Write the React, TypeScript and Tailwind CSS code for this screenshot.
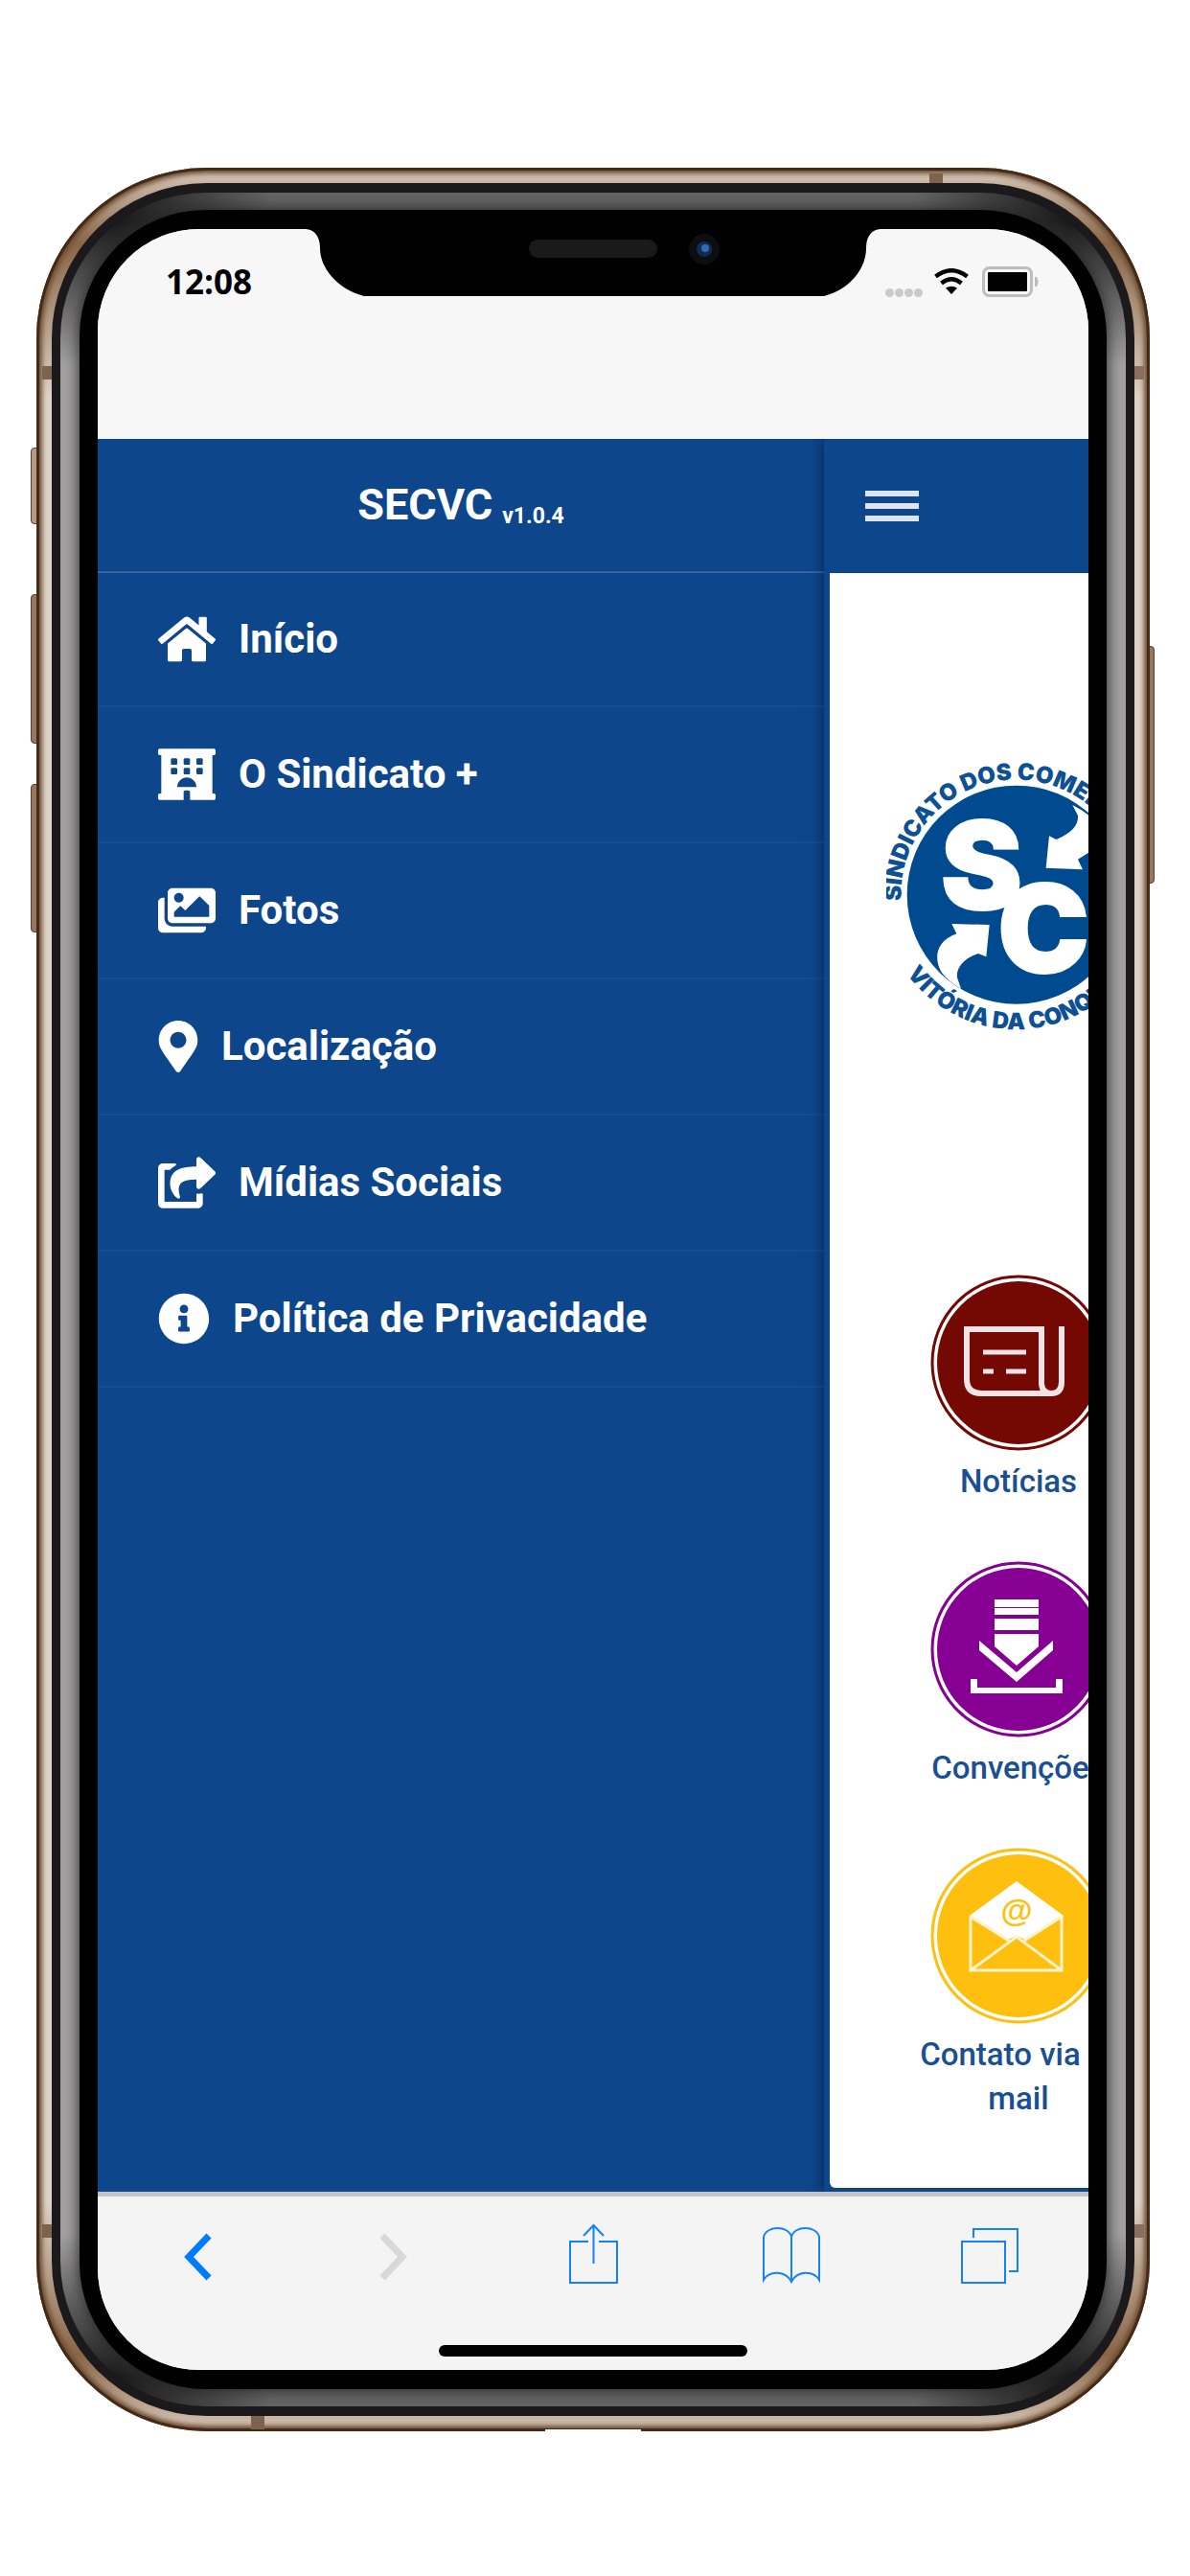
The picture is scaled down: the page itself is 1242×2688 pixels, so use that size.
import type { ReactNode } from "react";
import {
  FaHome,
  FaHotel,
  FaImages,
  FaInfoCircle,
  FaMapMarkerAlt,
  FaShareSquare,
} from "react-icons/fa";

const menu: { label: string; icon: ReactNode }[] = [
  { label: "Início", icon: <FaHome className="h-[54px] w-[60px]" /> },
  { label: "O Sindicato +", icon: <FaHotel className="h-[54px] w-[60px]" /> },
  { label: "Fotos", icon: <FaImages className="h-[54px] w-[60px]" /> },
  { label: "Localização", icon: <FaMapMarkerAlt className="h-[54px] w-[42px]" /> },
  { label: "Mídias Sociais", icon: <FaShareSquare className="h-[54px] w-[60px]" /> },
  { label: "Política de Privacidade", icon: <FaInfoCircle className="h-[54px] w-[54px]" /> },
];

function Badge({ color, children }: { color: string; children: ReactNode }) {
  return (
    <svg viewBox="0 0 184 184" className="size-[184px]" aria-hidden="true">
      <circle cx="92" cy="92" r="90" fill="#fff" stroke={color} strokeWidth="3" />
      <circle cx="92" cy="92" r="85" fill={color} />
      {children}
    </svg>
  );
}

const tiles: { label: string; icon: ReactNode }[] = [
  {
    label: "Notícias",
    icon: (
      <Badge color="#740803">
        <g fill="none" stroke="#f3e3e6" strokeWidth="6">
          <path d="M116 115V57H38v52q0 15 15 15h73q11 0 11-12V54" />
          <path d="M116 114q1 10 10 10" />
          <path d="M55 81h45M55 101h11M79 101h21" strokeWidth="5" />
        </g>
      </Badge>
    ),
  },
  {
    label: "Convenções",
    icon: (
      <Badge color="#860193">
        <g fill="#fff">
          <path d="M67 40h46v8H67zM67 49h46v7H67zM67 60h46v12H67zM67 76h46v13L90 109 67 89z" />
          <path d="M51 83l39 33 38-33v10L90 126 51 93z" />
          <path d="M42 123h7v9h82v-9h7v15H42z" />
        </g>
      </Badge>
    ),
  },
  {
    label: "Contato via E-mail",
    icon: (
      <Badge color="#febf0f">
        <path d="M90 35l49 36-40 25-9-4-9 4-40-25z" fill="#fff" />
        <path
          d="M42 71v57h95V71M42 128l48-35 47 35M42 72l40 25M137 72L98 97"
          fill="none"
          stroke="#fff3c8"
          strokeWidth="3"
        />
        <text
          x="90"
          y="77"
          textAnchor="middle"
          className="font-['Liberation_Sans'] text-[34px] font-bold"
          fill="#febf0f"
        >
          @
        </text>
      </Badge>
    ),
  },
];

function Logo() {
  return (
    <svg
      viewBox="225 150 828 864"
      className="h-[288px] w-[276px]"
      role="img"
      aria-label="Sindicato dos Comerciários de Vitória da Conquista"
    >
      <defs>
        <path id="ring-top" d="M272 600A360 360 0 1 1 991 600" />
        <path id="ring-bottom" d="M289 828A424 424 0 0 0 975 828" />
      </defs>
      <circle cx="632" cy="581" r="342" fill="#004b8f" />
      <g fill="#fff">
        <path d="M430 672l118 3-10 100-25-10c-45 15-70 45-66 75l12 35q-40-22-62-53c-22-38-20-95 48-119z" />
        <path d="M735 397l22 11c50-20 70-45 68-75l-17-33q50 25 80 60l30 60-61 30-32 20 15 32-115-5z" />
        <g className="font-['Inter'] text-[384px] font-black" stroke="#fff" strokeWidth="6">
          <text x="523" y="627" textAnchor="middle">
            S
          </text>
          <text x="574" y="826">
            C
          </text>
        </g>
      </g>
      <g className="font-['Inter'] text-[72px] font-black" fill="#0d5093">
        <text>
          <textPath href="#ring-top">SINDICATO DOS COMERCIÁRIOS</textPath>
        </text>
        <text>
          <textPath href="#ring-bottom">VITÓRIA DA CONQUISTA</textPath>
        </text>
      </g>
    </svg>
  );
}

function StatusBar() {
  return (
    <div className="relative h-[219px] bg-[#f7f7f7]">
      <svg
        viewBox="0 0 600 70"
        className="absolute top-0 left-1/2 h-[70px] w-[600px] -translate-x-1/2"
        aria-hidden="true"
      >
        <path
          d="M0 0h600c-10 1-15 8-15 20 0 20-15 42-44 50H61C32 62 15 40 15 20 15 8 10 1 0 0z"
          fill="#010101"
        />
        <rect x="233" y="11" width="134" height="19" rx="9.5" fill="#1b1a1b" />
        <circle cx="416" cy="21" r="16" fill="#0d0e12" />
        <circle cx="416" cy="21" r="8" fill="#132b52" />
        <circle cx="417" cy="20" r="4" fill="#326bb0" />
      </svg>
      <div className="flex items-center justify-between pt-[30px] pr-[51px] pl-[71px]">
        <time className="font-['Open_Sans'] text-[35px] leading-[50px] font-bold text-black">12:08</time>
        <div className="flex items-center">
          <div className="mt-[22px] mr-3 flex gap-px">
            <span className="size-[9px] rounded-full bg-[#cbcaca]" />
            <span className="size-[9px] rounded-full bg-[#cbcaca]" />
            <span className="size-[9px] rounded-full bg-[#cbcaca]" />
            <span className="size-[9px] rounded-full bg-[#cbcaca]" />
          </div>
          <svg viewBox="0 0 36 28" className="mr-3.5 h-7 w-9" aria-hidden="true">
            <g fill="none" stroke="#000" strokeWidth="4.5">
              <path d="M1.500 8.500Q18-4 34.500 8.500" />
              <path d="M7.500 15.500Q18 7 28.500 15.500" />
            </g>
            <path d="M12 20.500Q18 17 24 20.500L18 27z" />
          </svg>
          <svg viewBox="0 0 60 32" className="h-8 w-[60px]" aria-hidden="true">
            <rect x="1.500" y="1.500" width="50" height="29" rx="6" fill="none" stroke="#bdbdbd" strokeWidth="3" />
            <rect x="6" y="6" width="41" height="20" rx="1" />
            <path d="M55 11h2q3 5 0 10h-2z" fill="#bdbdbd" />
          </svg>
        </div>
      </div>
    </div>
  );
}

function SideMenu() {
  return (
    <nav className="flex-1 bg-[#0d468b] text-white" aria-label="Menu principal">
      <h1 className="flex h-[140px] items-baseline justify-center gap-2.5 border-b-2 border-[#36659f] pt-[42px] text-[45px] leading-[54px] font-bold">
        SECVC
        <small className="relative top-1 text-[23px]">v1.0.4</small>
      </h1>
      <ul>
        {menu.map((item) => (
          <li key={item.label} className="h-[142px] border-b-2 border-[#174c8f] first:h-[140px]">
            <a
              href="#"
              className="flex h-full items-center gap-6 pl-[63px] text-[42px] leading-[54px] font-bold"
            >
              {item.icon}
              {item.label}
            </a>
          </li>
        ))}
      </ul>
    </nav>
  );
}

function MainPane() {
  return (
    <main className="flex w-[276px] shrink-0 flex-col bg-[#0d468b] pb-1 shadow-[0_0_14px_rgba(0,0,0,0.5)]">
      <header className="flex h-[140px] items-center pl-[43px]">
        <button type="button" aria-label="Abrir menu" className="flex w-14 flex-col gap-[7px]">
          <span className="h-1.5 bg-[#dbe4ef]" />
          <span className="h-1.5 bg-[#dbe4ef]" />
          <span className="h-1.5 bg-[#dbe4ef]" />
        </button>
      </header>
      <div className="ml-1.5 flex-1 overflow-hidden rounded-bl-md bg-white pb-[70px]">
        <div className="flex w-[394px] flex-col items-center pt-[192px]">
          <Logo />
          <div className="mt-[252px] flex flex-col gap-[60px]">
            {tiles.map((tile) => (
              <a
                key={tile.label}
                href="#"
                className="flex w-[240px] flex-col items-center gap-[9px] text-center text-[33px] leading-[46px] font-medium text-[#1a4f93]"
              >
                {tile.icon}
                {tile.label}
              </a>
            ))}
          </div>
        </div>
      </div>
    </main>
  );
}

function ToolButton({ label, disabled, children }: { label: string; disabled?: boolean; children: ReactNode }) {
  return (
    <button type="button" aria-label={label} disabled={disabled} className="flex justify-center">
      <svg
        viewBox="0 0 64 64"
        className="size-16"
        fill="none"
        stroke={disabled ? "#d8d8d8" : "#1580ff"}
        strokeWidth="2"
      >
        {children}
      </svg>
    </button>
  );
}

function Toolbar() {
  return (
    <footer className="h-[186px] border-t-[5px] border-[#c3c4c6] bg-[#f4f4f4] pt-7">
      <div className="grid grid-cols-5">
        <ToolButton label="Voltar">
          <path d="M45 13L24 35l21 22" strokeWidth="7" stroke="#007aff" />
        </ToolButton>
        <ToolButton label="Avançar" disabled>
          <path d="M19 13l21 22-21 22" strokeWidth="7" />
        </ToolButton>
        <ToolButton label="Compartilhar">
          <path d="M27 19H8v43h49V19H38M32.500 42V3M22 13L32.500 2 43 13" />
        </ToolButton>
        <ToolButton label="Favoritos">
          <path d="M32 61V14C29 2 6 2 3 14v45c6-10 23-10 29 2 6-12 23-12 29-2V14C58 2 35 2 32 14" />
        </ToolButton>
        <ToolButton label="Abas">
          <path d="M3 19h45v43H3zM15 15V6h46v44h-9" />
        </ToolButton>
      </div>
      <div className="mx-auto mt-[63px] h-3 w-[322px] rounded-full bg-black" />
    </footer>
  );
}

export default function App() {
  return (
    <div className="min-h-screen bg-white pt-[175px] pr-[42px] pb-[148px] pl-[38px] font-['Roboto',sans-serif]">
      <div className="relative">
        {/* Side buttons */}
        <i className="absolute top-[292px] -left-1.5 h-20 w-3 rounded-l border border-[#5a4028] bg-[#b59c89]" />
        <i className="absolute top-[445px] -left-1.5 h-[156px] w-3 rounded-l border border-[#5a4028] bg-[#947661]" />
        <i className="absolute top-[643px] -left-1.5 h-[155px] w-3 rounded-l border border-[#5a4028] bg-[#947661]" />
        <i className="absolute top-[499px] -right-[5px] h-[248px] w-3 rounded-r border border-[#5a4028] bg-[#947661]" />

        {/* Gold band */}
        <div className="relative rounded-[178px] bg-[linear-gradient(to_bottom,#d8c8bb,#8a6646_80px,#ded2c7_240px,#ded2c7_calc(100%-240px),#8a6646_calc(100%-80px),#d8c8bb)] p-4 shadow-[inset_0_0_0_3px_#452b17,inset_0_0_5px_6px_#6b4c32]">
          {/* Antenna lines */}
          <i className="absolute top-[207px] left-1.5 h-3.5 w-3 bg-[#7d624e]" />
          <i className="absolute top-[207px] right-1.5 h-3.5 w-3 bg-[#8b6f5e]" />
          <i className="absolute bottom-[202px] left-1.5 h-3.5 w-3 bg-[#7d624e]" />
          <i className="absolute right-1.5 bottom-[202px] h-3.5 w-3 bg-[#8b6f5e]" />
          <i className="absolute top-1.5 right-[216px] h-3 w-3.5 bg-[#7d624e]" />
          <i className="absolute bottom-0.5 left-[224px] h-[15px] w-3.5 bg-[#7d624e]" />
          <i className="absolute bottom-0 left-1/2 h-0.5 w-[100px] -translate-x-1/2 bg-white" />

          <div className="relative rounded-[162px] bg-[#1b191b] px-[9px] py-2.5">
            {/* Glossy bezel */}
            <div className="rounded-[152px] bg-[linear-gradient(to_bottom,transparent_30px,#a3a1a2_180px,#a3a1a2_calc(100%-180px),transparent_calc(100%-30px)),linear-gradient(to_right,#1b1a1b_60px,#666566_220px,#666566_calc(100%-220px),#1b1a1b_calc(100%-60px))] px-5 py-[18px]">
              <div className="rounded-[132px] bg-[#010101] px-[19px] py-5 shadow-[0_0_16px_0_#222]">
                <div className="overflow-hidden rounded-[106px] bg-[#f4f4f4]">
                  <StatusBar />
                  <div className="flex overflow-hidden">
                    <SideMenu />
                    <MainPane />
                  </div>
                  <Toolbar />
                </div>
              </div>
            </div>
          </div>
        </div>
      </div>
    </div>
  );
}
